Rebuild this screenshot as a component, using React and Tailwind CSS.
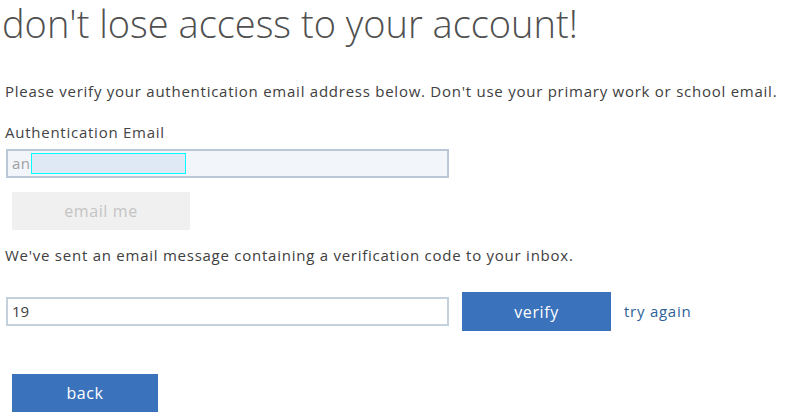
export default function App() {
  return (
    <div className="w-[797px] h-[420px] bg-white overflow-hidden font-['Open_Sans',sans-serif] text-[#404040]">
      <h1 className="pl-[2px] text-[38px] leading-[46px] font-light text-[#505050]">
        don't lose access to your account!
      </h1>

      <p className="mt-[35px] pl-[5px] text-[15px] leading-[20px] tracking-[0.75px]">
        Please verify your authentication email address below. Don't use your primary work or school email.
      </p>

      <label className="block mt-[21px] pl-[5px] text-[15px] leading-[20px] tracking-[0.75px] text-[#444]">
        Authentication Email
      </label>

      <div className="mt-[7px] ml-[6px] w-[443px] h-[29px] border-2 border-[#b9c7d6] bg-[#f2f6fb] flex items-center pl-[4px]">
        <span className="text-[15px] tracking-[0.5px] text-[#a0a0a0]">an</span>
        <div className="w-[155px] h-[21px] border-[1.5px] border-[#00ffff] bg-[#dfe8f5]"></div>
      </div>

      <button className="mt-[14px] ml-[12px] w-[178px] h-[38px] bg-[#f0f0f0] text-[#c4c4c4] text-[16px] tracking-[0.6px]">
        email me
      </button>

      <p className="mt-[15px] pl-[5px] text-[15px] leading-[20px] tracking-[0.75px]">
        We've sent an email message containing a verification code to your inbox.
      </p>

      <div className="mt-[27px] flex items-center">
        <div className="ml-[6px] w-[443px] h-[29px] border-2 border-[#c4d0dc] bg-white flex items-center pl-[4px] text-[15px] text-[#404040]">
          19
        </div>
        <button className="ml-[13px] w-[149px] h-[39px] bg-[#3a72bb] text-white text-[16px] tracking-[0.6px]">
          verify
        </button>
        <span className="ml-[13px] text-[15px] tracking-[0.75px] text-[#2f5f98]">try again</span>
      </div>

      <button className="mt-[43px] ml-[12px] w-[146px] h-[38px] bg-[#3a72bb] text-white text-[16px] tracking-[0.6px]">
        back
      </button>
    </div>
  );
}
